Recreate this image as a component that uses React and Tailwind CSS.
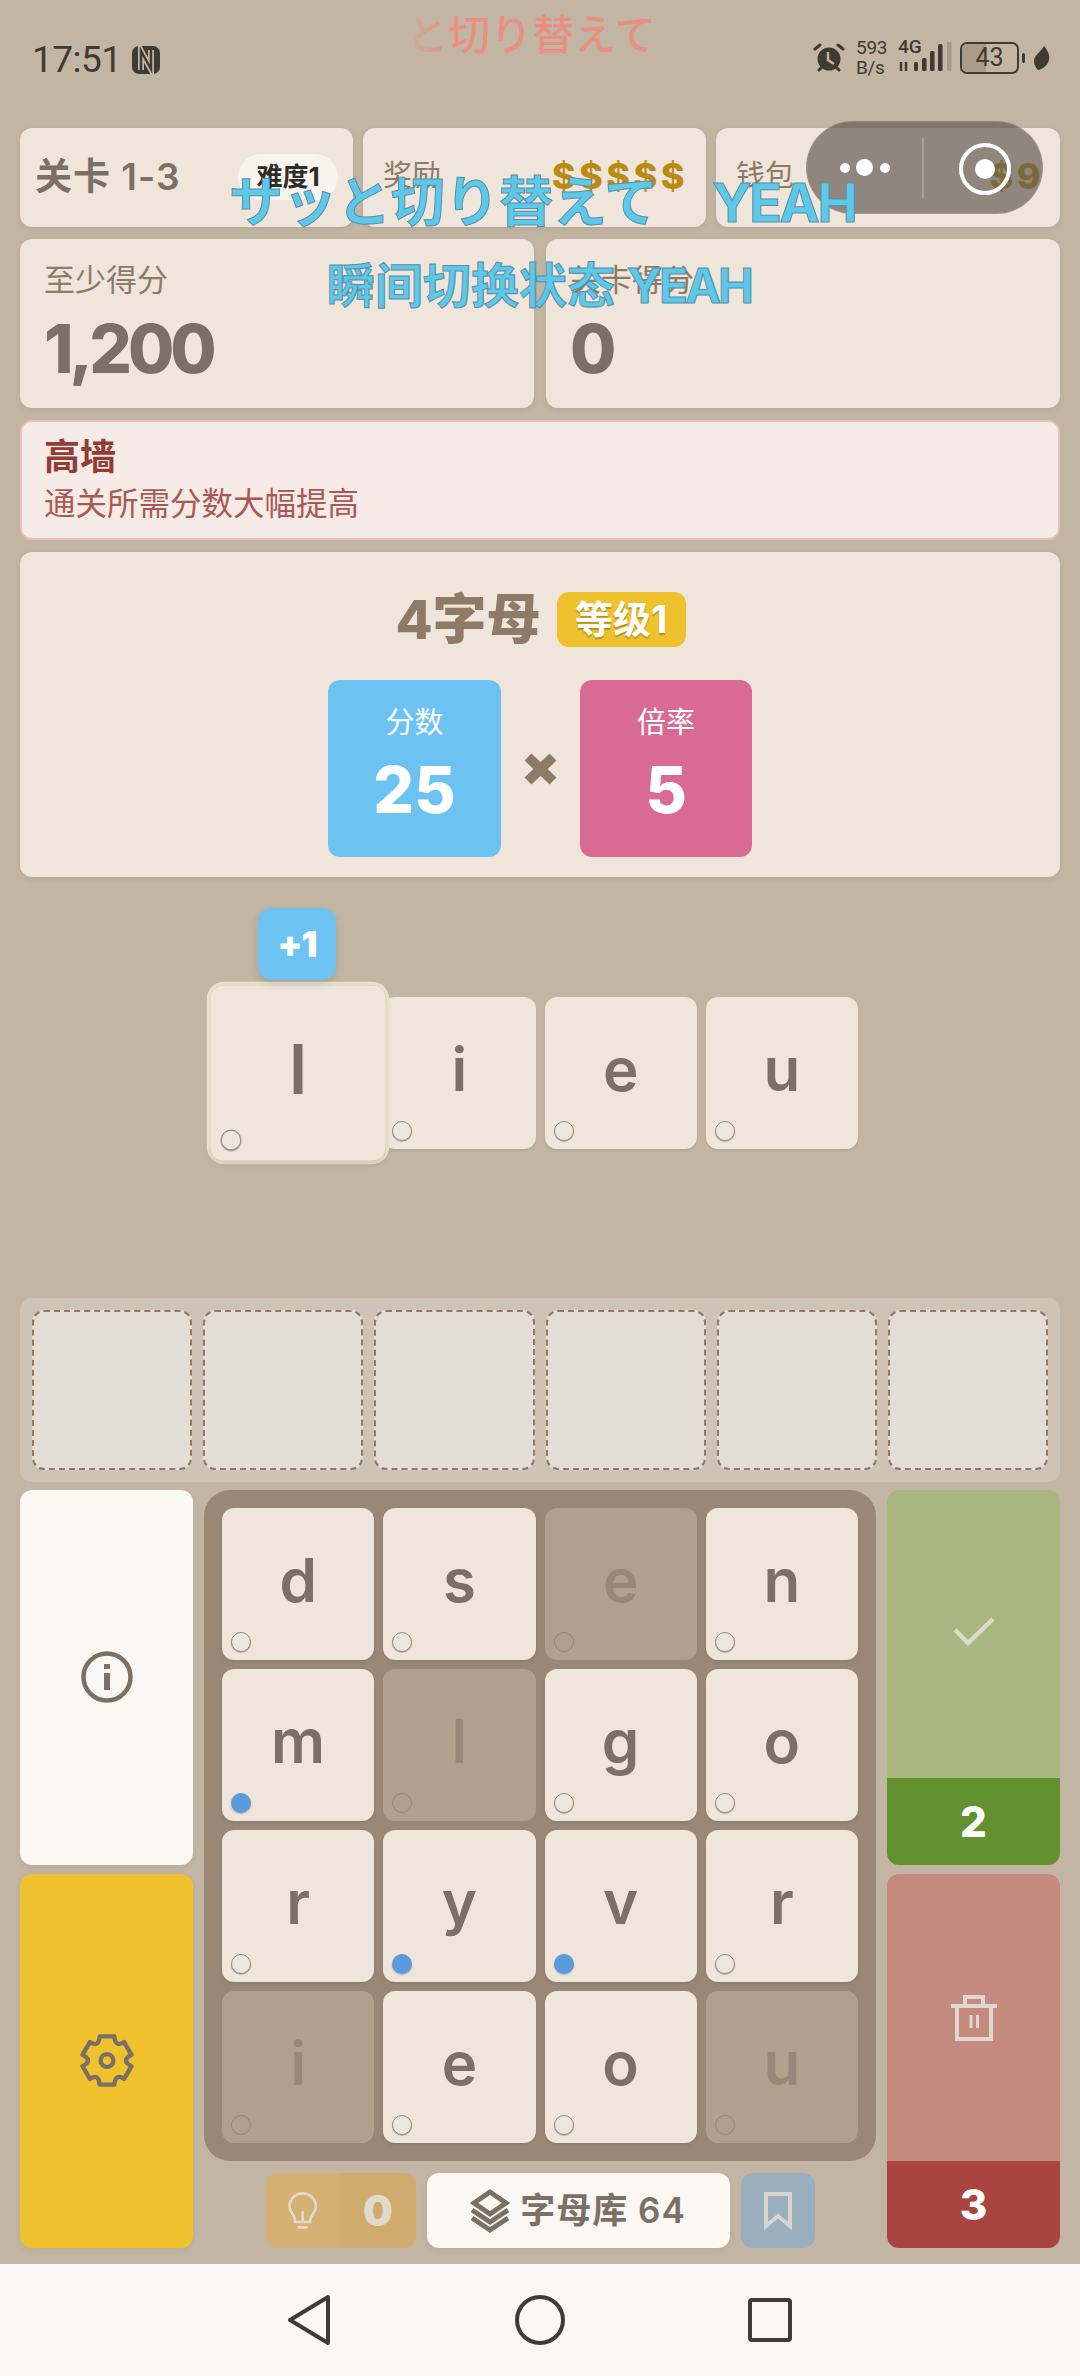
import React from "react";

const Dot = ({ on, big, dim }) => (
  <span
    className={
      "absolute rounded-full " +
      (big ? "left-[9px] bottom-[9px] w-[18px] h-[18px] " : "left-[9px] bottom-[8px] w-[20px] h-[20px] ") +
      (on
        ? "bg-[#5a9bdc] shadow-[0_1px_2px_rgba(0,0,0,0.25)]"
        : dim
        ? "border border-[#95877a]"
        : "bg-[#ebe6de] border border-[#94897e] shadow-[0_1px_1px_rgba(0,0,0,0.25)]")
    }
  />
);

const Tile = ({ ch, on, dim, big }) => (
  <div
    className={
      "relative h-[152px] rounded-[12px] flex items-center justify-center text-[60px] font-semibold leading-none pb-[8px] " +
      (dim ? "bg-[#b0a18f] text-[#97887a]" : "bg-[#efe5da] text-[#7a7065] shadow-[0_2px_3px_rgba(0,0,0,0.08)]")
    }
  >
    {ch}
    <Dot on={on} dim={dim} big={big} />
  </div>
);

const rows = [
  ["d"], ["s"], ["e", 0, 1], ["n"],
  ["m", 1], ["l", 0, 1], ["g"], ["o"],
  ["r"], ["y", 1], ["v", 1], ["r"],
  ["i", 0, 1], ["e"], ["o"], ["u", 0, 1],
];

export default function App() {
  return (
    <div className="relative w-[1080px] h-[2376px] overflow-hidden flex flex-col bg-[#c2b5a3] font-['Inter','Noto_Sans_CJK_SC',sans-serif]">
      {/* status bar */}
      <div className="h-[128px] shrink-0 px-[32px] pt-[38px] flex items-start justify-between text-[#3f3a34]">
        <div className="flex items-center gap-[10px] font-['Roboto',sans-serif] text-[37px] leading-[44px] tracking-[-0.5px]">
          <span>17:51</span>
          <svg width="28" height="28" viewBox="0 0 28 28" fill="none">
            <rect x="0" y="0" width="28" height="28" rx="7" fill="#3f3a34" />
            <path d="M9 24V5L19 23V4" stroke="#c2b5a3" strokeWidth="6" />
            <path d="M9 26V5L19 23V2" stroke="#3f3a34" strokeWidth="2.5" />
          </svg>
        </div>
        <div className="flex items-center h-[40px] font-['Roboto',sans-serif] mr-[-2px]">
          <svg width="32" height="32" viewBox="0 0 32 32" fill="none" className="mr-[11px]">
            <circle cx="16" cy="17" r="11.5" fill="#3f3a34" />
            <path d="M15 10v8l6 4" stroke="#c2b5a3" strokeWidth="2.5" />
            <path d="M2 7l5-4M30 7l-5-4M6 28l3-3M26 28l-3-3" stroke="#3f3a34" strokeWidth="3" strokeLinecap="round" />
          </svg>
          <div className="w-[34px] text-[19px] leading-[20px] tracking-[-0.3px] mr-[8px]">
            <div>593</div>
            <div>B/s</div>
          </div>
          <div className="relative w-[56px] h-[32px] mr-[6px]">
            <span className="absolute left-0 top-[-5px] text-[19px] font-medium leading-[20px]">4G</span>
            <svg width="56" height="32" viewBox="0 0 56 32" className="absolute left-0 top-0">
              <path d="M3 20v9M8 20v9" stroke="#3f3a34" strokeWidth="2.5" />
              <rect x="16" y="20" width="4" height="9" rx="1.5" fill="#3f3a34" />
              <rect x="24" y="16" width="4.500" height="13" rx="1.5" fill="#3f3a34" />
              <rect x="32" y="9" width="4.500" height="20" rx="1.5" fill="#3f3a34" />
              <rect x="40" y="2" width="4.500" height="27" rx="1.5" fill="#3f3a34" />
              <rect x="49" y="-6" width="4.500" height="35" rx="2" fill="#a69a89" />
            </svg>
          </div>
          <div className="relative w-[59px] h-[32px] rounded-[7px] border-[2px] border-[#3f3a34] flex items-center justify-center overflow-hidden text-[25px] mr-[3px]">
            <span className="absolute left-0 top-0 bottom-0 w-[43%] bg-[#a99c8b]" />
            <span className="relative">43</span>
          </div>
          <span className="w-[3px] h-[10px] bg-[#3f3a34] rounded-sm mr-[9px]" />
          <svg width="16" height="24" viewBox="0 0 16 24">
            <path d="M10 0C14 5 16 9 15 14C14 19 9 23 4 24C2 22 0 19 0 15C0 9 7 6 10 0Z" fill="#3f3a34" />
          </svg>
        </div>
      </div>

      {/* main */}
      <div className="flex-1 flex flex-col gap-[12px] px-[20px]">
        <div className="grid grid-cols-[333px_343px_344px] gap-[10px] h-[99px]">
          <div className="rounded-[12px] bg-[#efe5da] shadow-[0_2px_6px_rgba(0,0,0,0.08)] flex items-center justify-between pl-[15px] pr-[15px]">
            <span className="text-[37px] font-semibold tracking-[1px] text-[#7a7065] leading-none mb-[2px] whitespace-nowrap">关卡 1-3</span>
            <span className="w-[100px] h-[46px] rounded-full bg-[#f8f5ef] text-[#302c28] text-[26px] font-bold flex items-center justify-center mr-0 mb-[2px]">难度1</span>
          </div>
          <div className="rounded-[12px] bg-[#efe5da] shadow-[0_2px_6px_rgba(0,0,0,0.08)] flex items-center justify-between pl-[20px] pr-[18px]">
            <span className="text-[29px] text-[#8d7b68] mb-[4px]">奖励</span>
            <span className="text-[36px] font-extrabold text-[#bb8a12] tracking-[3.5px] mb-[4px]">$$$$$</span>
          </div>
          <div className="rounded-[12px] bg-[#efe5da] shadow-[0_2px_6px_rgba(0,0,0,0.08)] flex items-center justify-between pl-[20px] pr-[16px]">
            <span className="text-[29px] text-[#8d7b68] mb-[4px]">钱包</span>
            <span className="text-[36px] font-extrabold text-[#bb8a12] tracking-[3.5px] mb-[4px]">$9</span>
          </div>
        </div>

        <div className="grid grid-cols-2 gap-[12px] h-[169px]">
          {[["至少得分", "1,200"], ["关卡得分", "0"]].map(([a, b]) => (
            <div key={a} className="rounded-[12px] bg-[#efe5da] shadow-[0_2px_6px_rgba(0,0,0,0.08)] pl-[24px] pt-[19px]">
              <div className="text-[31px] leading-[44px] text-[#8d7b68]">{a}</div>
              <div className="text-[67px] font-extrabold leading-[76px] mt-[9px] text-[#7a7065] tracking-[-4px]">{b}</div>
            </div>
          ))}
        </div>

        <div className="h-[120px] rounded-[12px] bg-[#f7ebe8] border-2 border-[#e6c4bd] pl-[22px] pt-[10px]">
          <div className="text-[36px] leading-[50px] font-bold text-[#933c35]">高墙</div>
          <div className="text-[31.5px] leading-[40px] mt-[2px] text-[#a85a52]">通关所需分数大幅提高</div>
        </div>

        <div className="h-[325px] rounded-[12px] bg-[#efe5da] shadow-[0_2px_6px_rgba(0,0,0,0.08)] flex flex-col items-center pt-[40px]">
          <div className="flex items-center gap-[16px] h-[55px] ml-[1px]">
            <span className="text-[54px] font-extrabold leading-none text-[#8d7b68]">4字母</span>
            <span className="w-[129px] h-[55px] rounded-[12px] bg-[#eec12d] text-white text-[38px] font-bold flex items-center justify-center [text-shadow:0_2px_1px_rgba(120,90,0,0.45)]">等级1</span>
          </div>
          <div className="flex items-center mt-[33px]">
            <div className="w-[173px] h-[177px] rounded-[12px] bg-[#6cc3f2] text-white flex flex-col items-center pt-[21px]">
              <div className="text-[29px] leading-[44px]">分数</div>
              <div className="text-[64px] font-extrabold leading-[76px] mt-[7px]">25</div>
            </div>
            <svg width="79" height="36" viewBox="0 0 79 36">
              <path d="M27 6L52 30M52 6L27 30" stroke="#8d7b68" strokeWidth="10" />
            </svg>
            <div className="w-[172px] h-[177px] rounded-[12px] bg-[#d96a93] text-white flex flex-col items-center pt-[21px]">
              <div className="text-[29px] leading-[44px]">倍率</div>
              <div className="text-[64px] font-extrabold leading-[76px] mt-[7px]">5</div>
            </div>
          </div>
        </div>

        {/* played tiles */}
        <div className="h-[409px] pt-[108px]">
          <div className="grid grid-cols-[repeat(4,152.25px)] gap-[9px] justify-center">
            <div className="relative z-10">
              <div className="scale-[1.155] rounded-[12px] ring-[3px] ring-[#e8e1cc] shadow-[0_2px_6px_rgba(0,0,0,0.08)]">
                <Tile ch="l" big />
              </div>
              <div className="absolute left-[36px] top-[-89px] w-[78px] h-[72px] rounded-[14px] bg-[#6cc3f2] text-white text-[36px] tracking-[-1px] font-black flex items-center justify-center shadow-[0_4px_10px_rgba(0,0,0,0.12)]">+1</div>
            </div>
            <Tile ch="i" />
            <Tile ch="e" />
            <Tile ch="u" />
          </div>
        </div>

        {/* slots */}
        <div className="mt-[-12px] h-[184px] rounded-[12px] bg-[#cdc3b6] p-[12px] grid grid-cols-6 gap-[11px]">
          {[0, 1, 2, 3, 4, 5].map((i) => (
            <div key={i} className="rounded-[12px] bg-[#e3ddd6] border-2 border-dashed border-[#8d7b68]" />
          ))}
        </div>

        {/* play area */}
        <div className="mt-[-4px] grid grid-cols-[173px_672px_173px] gap-x-[11px] h-[758px]">
          <div className="flex flex-col gap-[9px]">
            <div className="h-[375px] rounded-[12px] bg-[#fbf8f3] flex items-center justify-center pb-[2px] shadow-[0_2px_6px_rgba(0,0,0,0.06)]">
              <svg width="52" height="52" viewBox="0 0 52 52" fill="none">
                <circle cx="26" cy="26" r="23.5" stroke="#7a7065" strokeWidth="4.5" />
                <rect x="23" y="13" width="6" height="5" fill="#7a7065" />
                <rect x="23" y="22" width="6" height="17" fill="#7a7065" />
              </svg>
            </div>
            <div className="flex-1 rounded-[12px] bg-[#eec12d] flex items-center justify-center pb-[2px] shadow-[0_2px_6px_rgba(0,0,0,0.06)]">
              <svg width="54" height="55" viewBox="30 33 160 164" fill="none" stroke="#7a7065" strokeWidth="13" strokeLinejoin="round">
                <path d="M88 43L132 43Q135 78 161 60L183 98Q150 115 183 132L161 170Q135 152 132 187L88 187Q85 152 59 170L37 132Q70 115 37 98L59 60Q85 78 88 43Z" />
                <circle cx="110" cy="115" r="19" />
              </svg>
            </div>
          </div>

          <div className="flex flex-col">
            <div className="h-[671px] rounded-[26px] bg-[#998877] p-[18px] grid grid-cols-4 gap-x-[9px] gap-y-[9px] content-start">
              {rows.map(([c, on, dim], i) => (
                <Tile key={i} ch={c} on={!!on} dim={!!dim} />
              ))}
            </div>
            <div className="flex justify-center gap-[11px] mt-[12px] h-[75px]">
              <div className="w-[150px] rounded-[12px] bg-[#cfab6e] flex overflow-hidden text-[#e0dacc]">
                <div className="w-[75px] bg-[#d4b072] flex items-center justify-center">
                  <svg width="30" height="38" viewBox="84 62 88 112" fill="none" stroke="#e0dacc" strokeWidth="8">
                    <path d="M105 150C105 125 88 125 88 105A39 39 0 1 1 166 105C166 125 149 125 149 150Z" />
                    <path d="M127 118V150M112 166H142" />
                  </svg>
                </div>
                <div className="flex-1 flex items-center justify-center text-[42px] font-black">0</div>
              </div>
              <div className="w-[303px] rounded-[12px] bg-[#fbf8f3] flex items-center justify-center gap-[10px] text-[#7a7065] shadow-[0_2px_6px_rgba(0,0,0,0.06)]">
                <svg width="40" height="44" viewBox="0 0 40 44" fill="none" stroke="#7a7065">
                  <path d="M20 3L36 14L20 25L4 14Z" strokeWidth="5" />
                  <path d="M2 21L20 33L38 21" strokeWidth="5" />
                  <path d="M2 29L20 41L38 29" strokeWidth="5" />
                </svg>
                <span className="text-[35px] font-semibold tracking-[1px]">字母库 64</span>
              </div>
              <div className="w-[74px] rounded-[12px] bg-[#9aaebd] flex items-center justify-center">
                <svg width="28" height="38" viewBox="0 0 28 38" fill="none" stroke="#d9d5ca" strokeWidth="4">
                  <path d="M2 2H26V34L14 24L2 34Z" />
                </svg>
              </div>
            </div>
          </div>

          <div className="flex flex-col gap-[9px]">
            <div className="h-[375px] rounded-[12px] overflow-hidden flex flex-col bg-[#a8b780]">
              <div className="flex-1 flex items-center justify-center pb-[4px]">
                <svg width="42" height="30" viewBox="0 0 42 30" fill="none" stroke="#dcdac8" strokeWidth="4.5">
                  <path d="M2 13L15 26L40 2" />
                </svg>
              </div>
              <div className="h-[87px] bg-[#64912f] text-white text-[42px] font-extrabold flex items-center justify-center">2</div>
            </div>
            <div className="flex-1 rounded-[12px] overflow-hidden flex flex-col bg-[#c48a7e]">
              <div className="flex-1 flex items-center justify-center">
                <svg width="46" height="46" viewBox="0 0 46 46" fill="none" stroke="#dfd8ce" strokeWidth="4">
                  <path d="M0 11H46" />
                  <path d="M14 10V2H32V10" />
                  <path d="M6 11V44H40V11" />
                  <path d="M20 20V33M26.500 20V33" strokeWidth="3" />
                </svg>
              </div>
              <div className="h-[87px] bg-[#a94441] text-white text-[42px] font-extrabold flex items-center justify-center">3</div>
            </div>
          </div>
        </div>
      </div>

      {/* navigation bar */}
      <div className="h-[112px] shrink-0 bg-[#f9f8f6] relative">
        <div className="h-full pl-[287px] flex items-center">
          <svg width="44" height="52" viewBox="0 0 44 52" fill="none" stroke="#3c3c3c" strokeWidth="4" strokeLinejoin="round">
            <path d="M41 3V49L3 26Z" />
          </svg>
          <svg width="52" height="52" viewBox="0 0 52 52" fill="none" stroke="#3c3c3c" strokeWidth="4" className="ml-[183px]">
            <circle cx="26" cy="26" r="23" />
          </svg>
          <svg width="46" height="46" viewBox="0 0 46 46" fill="none" stroke="#3c3c3c" strokeWidth="4" className="ml-[181px]">
            <rect x="3" y="3" width="40" height="40" rx="2" />
          </svg>
        </div>
      </div>

      {/* overlays: WeChat capsule and scrolling comments */}
      <div className="absolute left-[806px] top-[121px] w-[237px] h-[93px] rounded-full bg-[rgba(90,84,76,0.65)] border border-[rgba(255,255,255,0.12)]">
        <span className="absolute left-[33px] top-[41px] w-[10px] h-[10px] rounded-full bg-white" />
        <span className="absolute left-[49px] top-[37px] w-[17px] h-[17px] rounded-full bg-white" />
        <span className="absolute left-[73px] top-[41px] w-[10px] h-[10px] rounded-full bg-white" />
        <span className="absolute left-[115px] top-[16px] w-[2px] h-[60px] bg-[rgba(255,255,255,0.2)]" />
        <span className="absolute left-[152px] top-[21px] w-[52px] h-[52px] rounded-full border-[4px] border-white" />
        <span className="absolute left-[168px] top-[37px] w-[20px] h-[20px] rounded-full bg-white" />
      </div>

      <div className="absolute left-[406px] top-[5px] text-[42px] font-medium leading-[60px] whitespace-nowrap text-[#e8907f] [mask-image:linear-gradient(90deg,transparent,black_16%)]">と切り替えて</div>
      <div className="absolute left-[229px] top-[165px] text-[54px] font-bold leading-[76px] whitespace-nowrap text-[#5cc8ea] [-webkit-text-stroke:1px_#5b8ea6]">
        サッと切り替えて<span className="ml-[54px] tracking-[-2.5px]">YEAH</span>
      </div>
      <div className="absolute left-[327px] top-[251px] text-[48px] font-bold leading-[70px] whitespace-nowrap text-[#5cc8ea] [-webkit-text-stroke:1px_#5b8ea6]">
        瞬间切换状态<span className="ml-[12px] tracking-[-3px]">YEAH</span>
      </div>
    </div>
  );
}
